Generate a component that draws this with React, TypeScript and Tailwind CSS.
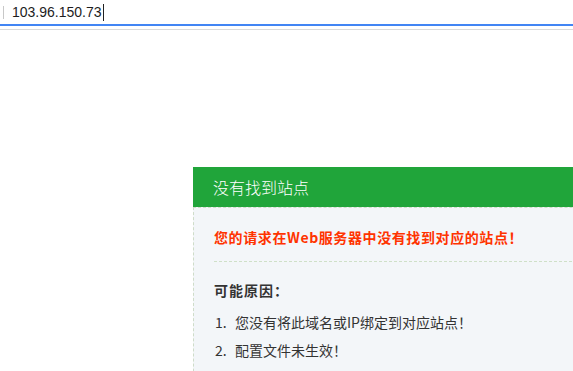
const cjk = "font-['Noto_Sans_CJK_SC','Liberation_Sans',sans-serif]";

const reasons = ['您没有将此域名或IP绑定到对应站点！', '配置文件未生效！'];

export default function App() {
  return (
    <div className="w-[573px] h-[371px] overflow-hidden bg-white">
      {/* Address bar */}
      <div className="flex items-center h-6 pl-[3px]">
        <span className="w-px h-[13px] bg-[#c8c8c8]" />
        <span className="ml-2 font-['Liberation_Sans',sans-serif] text-[14px] leading-none text-[#1d1d1d]">
          103.96.150.73
        </span>
        <span className="ml-px w-px h-[17px] bg-[#222]" />
      </div>
      <div className="h-0.5 bg-[#4285f4]" />
      <div className="h-[3px]" />
      <div className="h-px bg-[#dadada]" />

      {/* Site not found panel */}
      <div className={`ml-[193px] mt-[137px] w-[500px] ${cjk}`}>
        <div className="h-10 pl-5 bg-[#20a53a] text-white text-[16px] font-light leading-10">没有找到站点</div>
        <div className="h-[200px] bg-[#f3f6f9] border border-t border-dashed border-[#cfdcc9] px-5">
          <div className="pt-[19px] pb-[14px] border-b border-dashed border-[#cfe0c8]">
            <h3 className="text-[14px] leading-5 font-bold tracking-[0.6px] text-[#ff3300]">
              您的请求在Web服务器中没有找到对应的站点！
            </h3>
          </div>
          <div className="pt-[18px] text-[14px] text-[#333]">
            <p className="leading-5 font-bold tracking-[1px]">可能原因：</p>
            <ol className="mt-2">
              {reasons.map((r, i) => (
                <li key={i} className="flex leading-7">
                  <span className="w-[21px] pl-px">{i + 1}.</span>
                  <span>{r}</span>
                </li>
              ))}
            </ol>
          </div>
        </div>
      </div>
    </div>
  );
}
